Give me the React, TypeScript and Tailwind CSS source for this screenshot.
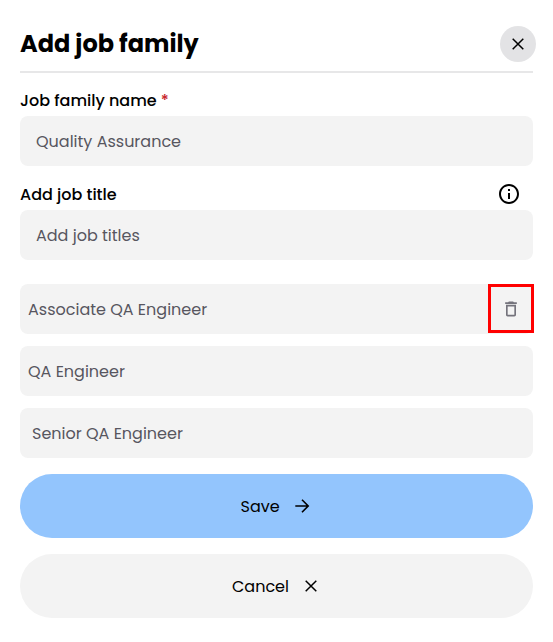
import type { ReactNode } from "react";

function CloseIcon() {
  return (
    <svg className="size-4 shrink-0" viewBox="0 0 16 16" fill="none" stroke="currentColor" strokeWidth="1.5">
      <path d="M2.700 2.700 13.300 13.300M13.300 2.700 2.700 13.300" />
    </svg>
  );
}

function ArrowIcon() {
  return (
    <svg className="size-4 shrink-0" viewBox="0 0 16 16" fill="none" stroke="currentColor" strokeWidth="1.600">
      <path d="M1.300 8H14M8 1.800 14.200 8 8 14.200" />
    </svg>
  );
}

function InfoIcon() {
  return (
    <svg className="size-6" viewBox="0 0 24 24" fill="currentColor">
      <path d="M11 7h2v2h-2zm0 4h2v6h-2zm1-9C6.480 2 2 6.480 2 12s4.480 10 10 10 10-4.480 10-10S17.520 2 12 2m0 18c-4.410 0-8-3.590-8-8s3.590-8 8-8 8 3.590 8 8-3.590 8-8 8" />
    </svg>
  );
}

function TrashIcon() {
  return (
    <svg className="size-5" viewBox="0 0 24 24" fill="currentColor">
      <path d="M16 9v10H8V9zm-1.500-6h-5l-1 1H5v2h14V4h-3.500zM18 7H6v12c0 1.100.9 2 2 2h8c1.100 0 2-.9 2-2z" />
    </svg>
  );
}

function Field({ className, children }: { className: string; children: ReactNode }) {
  return (
    <div className={`flex h-[50px] items-center justify-between rounded-lg bg-[#f3f3f3] text-[#57565f] ${className}`}>
      {children}
    </div>
  );
}

export default function App() {
  return (
    <main className="h-[642px] w-[553px] overflow-hidden bg-white pr-5 pl-5 pt-[26px] font-[Poppins,Inter,sans-serif] text-base leading-6 whitespace-nowrap text-black">
      <header className="flex h-[47px] w-[513px] items-start justify-between border-b-2 border-[#e7e7e8]">
        <h1 className="text-2xl leading-9 font-bold">Add job family</h1>
        <button aria-label="Close" className="-mr-[3px] flex size-9 shrink-0 items-center justify-center rounded-full bg-[#e3e3e5]">
          <CloseIcon />
        </button>
      </header>

      <label className="mt-4 block h-6 font-medium">
        Job family name <span className="text-[#c8262c]">*</span>
      </label>
      <Field className="mt-[3px] w-[513px] px-4">
        <span className="pt-0.5">Quality Assurance</span>
      </Field>

      <div className="mt-4 flex h-6 w-[513px] items-start justify-between pr-3 font-medium">
        <span className="pt-px">Add job title</span>
        <InfoIcon />
      </div>
      <Field className="mt-1 w-[513px] px-4">
        <span className="pt-0.5">Add job titles</span>
      </Field>

      <div className="mt-6 flex w-[513px] flex-col gap-3">
        <Field className="pl-2">
          <span className="pt-0.5">Associate QA Engineer</span>
          <button aria-label="Delete job title" className="-mr-px flex h-[49px] w-[46px] items-center justify-center self-start border-3 border-[#ff0000] text-[#74737c]">
            <TrashIcon />
          </button>
        </Field>
        <Field className="pl-2">
          <span className="pt-0.5">QA Engineer</span>
        </Field>
        <Field className="pl-3">
          <span className="pt-0.5">Senior QA Engineer</span>
        </Field>
      </div>

      <div className="mt-4 flex w-[513px] flex-col gap-4">
        <button className="flex h-16 items-center rounded-full bg-[#93c5fd] pl-[220.500px]">
          <span className="w-[53.500px] pt-0.5 text-left">Save</span>
          <ArrowIcon />
        </button>
        <button className="flex h-16 items-center rounded-full bg-[#f3f3f3] pl-[212px]">
          <span className="w-[71px] pt-0.5 text-left">Cancel</span>
          <CloseIcon />
        </button>
      </div>
    </main>
  );
}
